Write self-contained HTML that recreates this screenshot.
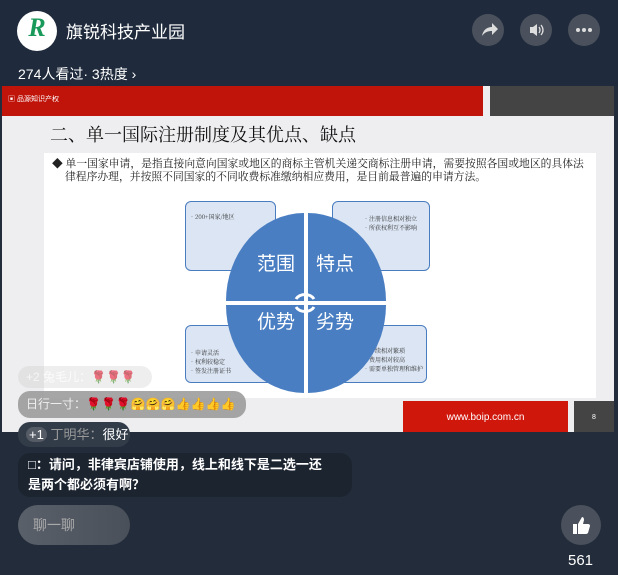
<!DOCTYPE html><html><head><meta charset="utf-8"><style>
body{margin:0;width:618px;height:575px;overflow:hidden;background:#222c3a;font-family:"Liberation Sans","Noto Sans CJK SC",sans-serif;position:relative}
.a{position:absolute}
.btn{position:absolute;width:32px;height:32px;border-radius:50%;background:#4a515c;top:14px}
.box{position:absolute;background:#dbe5f3;border:1.5px solid #4a7cc0;border-radius:6px;font-size:6px;color:#333;font-family:"Noto Serif CJK SC",serif;line-height:9px}
.q{position:absolute;background:#4a7ec2;color:#fff;font-size:19px;font-family:"Noto Sans CJK SC",sans-serif}
.cm{position:absolute;left:18px;border-radius:12px;font-size:13px;color:#fff;padding:0 8px;box-sizing:border-box;white-space:nowrap;overflow:hidden}
</style></head><body>
<div class="a" style="left:0;top:0;width:618px;height:86px;background:#1f2b3c"></div>
<div class="a" style="left:17px;top:11px;width:40px;height:40px;border-radius:50%;background:#fff;text-align:center;font:italic bold 26px 'Liberation Serif',serif;color:#1a9a5a;line-height:34px">R</div>
<div class="a" style="left:66px;top:18px;font-size:17px;color:#fff">旗锐科技产业园</div>
<div class="btn" style="left:472px"><svg width="32" height="32"><path d="M10 22c1-6 5-9 10-9v-4l6 6-6 6v-4c-4 0-7 1-10 5z" fill="#ddd"/></svg></div>
<div class="btn" style="left:520px"><svg width="32" height="32"><path d="M10 13h3l4-3v12l-4-3h-3z" fill="#ddd"/><path d="M19 13q2 3 0 6M21 11q4 5 0 10" stroke="#ddd" fill="none" stroke-width="1.3"/></svg></div>
<div class="btn" style="left:568px"><svg width="32" height="32"><circle cx="10" cy="16" r="2" fill="#ddd"/><circle cx="16" cy="16" r="2" fill="#ddd"/><circle cx="22" cy="16" r="2" fill="#ddd"/></svg></div>
<div class="a" style="left:18px;top:64px;font-size:14px;color:#fff">274人看过· 3热度 ›</div>
<div class="a" style="left:2px;top:86px;width:612px;height:346px;background:#eeeef0"></div>
<div class="a" style="left:2px;top:86px;width:481px;height:30px;background:#c0140b"></div>
<div class="a" style="left:8px;top:94px;font-size:7px;color:#fff">▣ 品源知识产权</div>
<div class="a" style="left:490px;top:86px;width:124px;height:30px;background:#444"></div>
<div class="a" style="left:50px;top:121px;font-size:18px;color:#111;font-family:'Noto Serif CJK SC',serif;white-space:nowrap">二、单一国际注册制度及其优点、缺点</div>
<div class="a" style="left:44px;top:153px;width:552px;height:245px;background:#fff"></div>
<div class="a" style="left:52px;top:157px;width:526px;font-size:10.8px;line-height:13px;color:#222;font-family:'Noto Serif CJK SC',serif;padding-left:13px;text-indent:-13px">◆ 单一国家申请，是指直接向意向国家或地区的商标主管机关递交商标注册申请，需要按照各国或地区的具体法律程序办理，并按照不同国家的不同收费标准缴纳相应费用，是目前最普遍的申请方法。</div>
<div class="box" style="left:185px;top:201px;width:91px;height:70px;padding:10px 3px;box-sizing:border-box">•200+国家/地区</div>
<div class="box" style="left:332px;top:201px;width:98px;height:70px;padding:12px 0 0 30px;box-sizing:border-box">•注册信息相对独立<br>•所获权利互不影响</div>
<div class="box" style="left:185px;top:325px;width:92px;height:58px;padding:22px 3px 0;box-sizing:border-box">•申请灵活<br>•权利较稳定<br>•签发注册证书</div>
<div class="box" style="left:334px;top:325px;width:93px;height:58px;padding:20px 0 0 28px;box-sizing:border-box">•手续相对繁琐<br>•费用相对较高<br>•需要单独管理和维护</div>
<div class="q" style="left:226px;top:213px;width:78px;height:88px;border-radius:100% 0 0 0"><span class="a" style="left:31px;top:36px">范围</span></div>
<div class="q" style="left:308px;top:213px;width:78px;height:88px;border-radius:0 100% 0 0"><span class="a" style="left:8px;top:36px">特点</span></div>
<div class="q" style="left:226px;top:305px;width:78px;height:88px;border-radius:0 0 0 100%"><span class="a" style="left:31px;top:2px">优势</span></div>
<div class="q" style="left:308px;top:305px;width:78px;height:88px;border-radius:0 0 100% 0"><span class="a" style="left:8px;top:2px">劣势</span></div>
<svg class="a" style="left:292px;top:287px" width="26" height="32"><path d="M4 12a10 8 0 0 1 18 0M4 20a10 8 0 0 0 18 0" stroke="#fff" stroke-width="3" fill="none"/></svg>
<div class="a" style="left:403px;top:401px;width:165px;height:31px;background:#d0170c;color:#fff;font-size:10px;text-align:center;line-height:34px">www.boip.com.cn</div>
<div class="a" style="left:574px;top:401px;width:40px;height:31px;background:#444;color:#fff;font-size:7px;text-align:center;line-height:34px">8</div>
<div class="cm" style="top:366px;width:134px;height:22px;background:rgba(200,200,200,.5);color:#fafafa;line-height:22px;opacity:.6;font-size:12px">+2 兔毛儿：🌹🌹🌹</div>
<div class="cm" style="top:391px;width:228px;height:27px;background:rgba(150,150,150,.85);line-height:27px;color:#eee;font-size:12px">日行一寸：🌹🌹🌹🤗🤗🤗👍👍👍👍</div>
<div class="a" style="left:0;top:432px;width:618px;height:143px;background:#222c3a"></div>
<div class="cm" style="top:422px;width:112px;height:25px;background:#323c49;line-height:25px"><span style="background:#555c66;border-radius:8px;padding:0 3px">+1</span> <span style="color:#999">丁明华：</span>很好</div>
<div class="cm" style="top:453px;width:334px;height:44px;background:#1c2430;line-height:20px;padding:2px 22px 0 10px;font-weight:bold;white-space:normal;font-size:13px">□：请问，非律宾店铺使用，线上和线下是二选一还是两个都必须有啊？</div>
<div class="a" style="left:18px;top:505px;width:112px;height:40px;border-radius:20px;background:linear-gradient(90deg,#5a606a,#4a505a);color:#aaa;font-size:14px;line-height:40px;padding-left:15px;box-sizing:border-box">聊一聊</div>
<div class="a" style="left:561px;top:505px;width:40px;height:40px;border-radius:50%;background:#4a515c"><svg width="40" height="40"><path d="M12 19h4v10h-4zM17 19l4-7q2 0 2 3l-1 4h5q2 0 2 2l-2 7q-1 1-2 1h-8z" fill="#fff"/></svg></div>
<div class="a" style="left:568px;top:552px;color:#fff;font-size:15px">561</div>
</body></html>
